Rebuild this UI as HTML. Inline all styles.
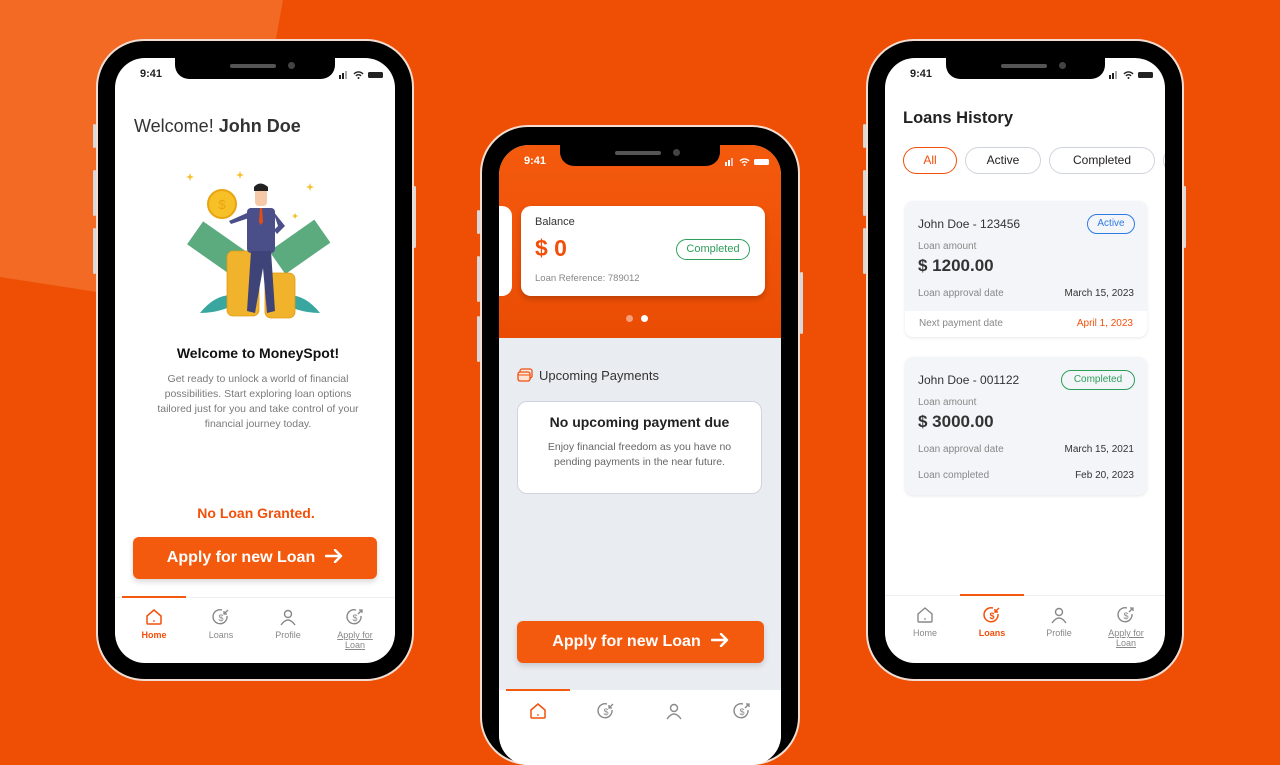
<!DOCTYPE html>
<html><head><meta charset="utf-8"><style>
*{margin:0;padding:0;box-sizing:border-box}
body{width:1280px;height:720px;overflow:hidden;background:#EF4F05;font-family:"Liberation Sans",sans-serif;position:relative}
.a{position:absolute}
.phone{position:absolute;background:#000;border:2px solid #f3ddd2;border-radius:48px}
.btn{position:absolute;width:3px;background:#d9d9d9;border-radius:2px}
.screen{position:absolute;background:#fff;border-radius:30px;overflow:hidden}
.notch{position:absolute;height:21px;background:#000;border-radius:0 0 14px 14px}
.spk{position:absolute;width:46px;height:4px;background:#555;border-radius:2px;top:6px}
.cam{position:absolute;width:7px;height:7px;background:#444;border-radius:50%;top:4px}
.time{position:absolute;font-size:11px;font-weight:bold;color:#222}
.c{text-align:center}
.tab{position:absolute;width:66px;text-align:center;font-size:9px;color:#888}
.tab svg{display:block;margin:0 auto 3px}
.ab{display:inline-block;vertical-align:middle;margin-left:10px;margin-top:-3px}
</style></head><body>
<svg class="a" style="left:0;top:0" width="300" height="300"><polygon points="0,0 283,0 272,60 240,200 97,292 0,277" fill="#F26A24"/></svg>

<!-- PHONE 1 -->
<div class="btn" style="left:93px;top:124px;height:24px"></div>
<div class="btn" style="left:93px;top:170px;height:46px"></div>
<div class="btn" style="left:93px;top:228px;height:46px"></div>
<div class="btn" style="left:413px;top:186px;height:62px"></div>
<div class="phone" style="left:96px;top:39px;width:318px;height:642px"></div>
<div class="screen" style="left:115px;top:58px;width:280px;height:605px">
 <div class="time" style="left:25px;top:10px">9:41</div>
 <svg class="a" style="left:224px;top:12px" width="46" height="10"><rect x="0" y="5" width="2" height="4" fill="#222"/><rect x="3" y="3" width="2" height="6" fill="#222"/><rect x="6" y="1" width="2" height="8" fill="#aaa"/><path d="M15 4 a6 6 0 0 1 9 0 M17 6 a3 3 0 0 1 5 0" stroke="#222" stroke-width="1.4" fill="none"/><circle cx="19.5" cy="8" r="1" fill="#222"/><rect x="29" y="2" width="15" height="6" rx="1.5" fill="#222"/></svg>
 <div class="a" style="left:19px;top:58px;font-size:18px;color:#333">Welcome! <b>John Doe</b></div>
 <svg class="a" style="left:70px;top:105px" width="150" height="160" viewBox="0 0 150 160">
  <g fill="#f6c026"><path d="M5 10 l1 3 3 1 -3 1 -1 3 -1 -3 -3 -1 3 -1z"/><path d="M55 8 l1 3 3 1 -3 1 -1 3 -1 -3 -3 -1 3 -1z"/><path d="M125 20 l1 3 3 1 -3 1 -1 3 -1 -3 -3 -1 3 -1z"/><path d="M110 50 l1 2 2 1 -2 1 -1 2 -1 -2 -2 -1 2 -1z"/></g>
  <g transform="rotate(35 30 85)"><rect x="5" y="70" width="55" height="28" fill="#5bab7f"/></g>
  <g transform="rotate(-35 115 85)"><rect x="88" y="70" width="55" height="28" fill="#5bab7f"/></g>
  <path d="M15 150 q20 -25 45 -15 q-20 15 -45 15z" fill="#3aa6a0"/><path d="M135 150 q-20 -25 -45 -15 q20 15 45 15z" fill="#3aa6a0"/>
  <g fill="#f1b32c" stroke="#e09a10" stroke-width="0.8"><rect x="42" y="88" width="32" height="65" rx="6"/><rect x="80" y="110" width="30" height="45" rx="6"/></g>
  <circle cx="37" cy="41" r="14" fill="#f6c026" stroke="#e9a412" stroke-width="2"/><text x="37" y="46" font-size="13" text-anchor="middle" fill="#e9a412" font-family="Liberation Sans">$</text>
  <rect x="62" y="45" width="28" height="45" rx="4" fill="#4a4f8a"/><path d="M62 50 l-18 8 2 3 18 -6z M88 48 l12 15 -8 8 -3 -4 4 -4z" fill="#4a4f8a"/>
  <path d="M66 88 l-4 60 8 2 8 -45 4 45 8 -2 -4 -60z" fill="#3f4478"/>
  <rect x="70" y="25" width="12" height="18" rx="4" fill="#f5c9a8"/><path d="M69 24 q6 -7 14 0 l0 4 -14 0z" fill="#222"/><path d="M75 45 l2 0 1 14 -2 3 -2 -3z" fill="#e44d12"/>
 </svg>
 <div class="a c" style="left:0;width:286px;top:287px;font-size:14px;font-weight:bold;color:#111">Welcome to MoneySpot!</div>
 <div class="a c" style="left:35px;width:216px;top:314px;font-size:10.5px;line-height:15px;color:#7a7a7a">Get ready to unlock a world of financial possibilities. Start exploring loan options tailored just for you and take control of your financial journey today.</div>
 <div class="a c" style="left:0;width:282px;top:447px;font-size:14px;font-weight:bold;color:#f2500a">No Loan Granted.</div>
 <div class="a c" style="left:18px;top:479px;width:244px;height:42px;background:#f45a0d;border-radius:6px;color:#fff;font-size:16px;font-weight:bold;line-height:42px;box-shadow:0 3px 6px rgba(0,0,0,.15)">Apply for new Loan<svg class="ab" width="18" height="14" viewBox="0 0 18 14"><path d="M1 7 H16 M10 1 L16 7 L10 13" stroke="#fff" stroke-width="2.4" fill="none" stroke-linecap="round" stroke-linejoin="round"/></svg></div>
 <div class="a" style="left:0;top:539px;width:280px;height:1px;background:#eee"></div>
 <div class="a" style="left:7px;top:538px;width:64px;height:2px;background:#f45a0d"></div>
 <div class="tab" style="left:6px;top:549px;color:#f2500a;font-weight:bold"><svg width="20" height="20" viewBox="0 0 20 20"><path d="M3 9 L10 3 L17 9 V16 Q17 17 16 17 H4 Q3 17 3 16Z" fill="none" stroke="#f2500a" stroke-width="1.5"/><circle cx="10" cy="14" r="0.9" fill="#f2500a"/></svg>Home</div>
 <div class="tab" style="left:73px;top:549px"><svg width="20" height="20" viewBox="0 0 20 20"><path d="M16 9 A7 7 0 1 1 11 3" fill="none" stroke="#888" stroke-width="1.4"/><path d="M17 3 l-4 4 M13 4 v3 h3" stroke="#888" stroke-width="1.3" fill="none"/><text x="10" y="14" font-size="9" text-anchor="middle" fill="#888">$</text></svg>Loans</div>
 <div class="tab" style="left:140px;top:549px"><svg width="20" height="20" viewBox="0 0 20 20"><circle cx="10" cy="7" r="3.5" fill="none" stroke="#888" stroke-width="1.4"/><path d="M3 18 q7 -10 14 0" fill="none" stroke="#888" stroke-width="1.4"/></svg>Profile</div>
 <div class="tab" style="left:207px;top:549px;line-height:10px;text-decoration:underline"><svg width="20" height="20" viewBox="0 0 20 20"><path d="M16 9 A7 7 0 1 1 11 3" fill="none" stroke="#888" stroke-width="1.4"/><path d="M13 7 l4 -4 M14 3 h3 v3" stroke="#888" stroke-width="1.3" fill="none"/><text x="10" y="14" font-size="9" text-anchor="middle" fill="#888">$</text></svg>Apply for<br>Loan</div>
</div>
<div class="notch" style="left:175px;top:58px;width:160px"><div class="spk" style="left:55px"></div><div class="cam" style="left:113px"></div></div>

<!-- PHONE 2 -->
<div class="btn" style="left:477px;top:210px;height:24px"></div>
<div class="btn" style="left:477px;top:256px;height:46px"></div>
<div class="btn" style="left:477px;top:316px;height:46px"></div>
<div class="btn" style="left:800px;top:272px;height:62px"></div>
<div class="phone" style="left:480px;top:125px;width:320px;height:640px"></div>
<div class="screen" style="left:499px;top:145px;width:282px;height:620px;background:#e9ecf1">
 <div class="a" style="left:0;top:0;width:282px;height:193px;background:linear-gradient(#f45a0d,#ea4c04)"></div>
 <div class="time" style="left:25px;top:10px;color:#fff">9:41</div>
 <svg class="a" style="left:226px;top:12px" width="46" height="10"><rect x="0" y="5" width="2" height="4" fill="#fff"/><rect x="3" y="3" width="2" height="6" fill="#fff"/><rect x="6" y="1" width="2" height="8" fill="#fbb"/><path d="M15 4 a6 6 0 0 1 9 0 M17 6 a3 3 0 0 1 5 0" stroke="#fff" stroke-width="1.4" fill="none"/><circle cx="19.5" cy="8" r="1" fill="#fff"/><rect x="29" y="2" width="15" height="6" rx="1.5" fill="#fff"/></svg>
 <div class="a" style="left:-20px;top:61px;width:33px;height:90px;background:#fff;border-radius:10px"></div>
 <div class="a" style="left:22px;top:61px;width:244px;height:90px;background:#fff;border-radius:10px;box-shadow:0 3px 6px rgba(0,0,0,.2)">
  <div class="a" style="left:14px;top:10px;font-size:11px;color:#333">Balance</div>
  <div class="a" style="left:14px;top:29px;font-size:23px;font-weight:bold;color:#f2500a">$ 0</div>
  <div class="a" style="left:155px;top:33px;width:74px;height:21px;border:1.5px solid #2e9e5b;border-radius:11px;font-size:11px;color:#2e9e5b;text-align:center;line-height:18px">Completed</div>
  <div class="a" style="left:14px;top:67px;font-size:9.5px;color:#888">Loan Reference: 789012</div>
 </div>
 <div class="a" style="left:127px;top:170px;width:7px;height:7px;border-radius:50%;background:#f5a07c"></div>
 <div class="a" style="left:142px;top:170px;width:7px;height:7px;border-radius:50%;background:#fff"></div>
 <svg class="a" style="left:18px;top:223px" width="16" height="14"><rect x="3" y="1" width="12" height="9" rx="2" fill="none" stroke="#f2500a" stroke-width="1.3"/><rect x="1" y="4" width="12" height="9" rx="2" fill="#fde3d6" stroke="#f2500a" stroke-width="1.3"/><line x1="1" y1="7" x2="13" y2="7" stroke="#f2500a"/></svg>
 <div class="a" style="left:40px;top:223px;font-size:13px;color:#333">Upcoming Payments</div>
 <div class="a c" style="left:18px;top:256px;width:245px;height:93px;background:#fff;border:1.5px solid #cfd3dd;border-radius:10px">
  <div style="margin-top:12px;font-size:14px;font-weight:bold;color:#222">No upcoming payment due</div>
  <div style="margin-top:10px;font-size:10.5px;line-height:15px;color:#666">Enjoy financial freedom as you have no<br>pending payments in the near future.</div>
 </div>
 <div class="a c" style="left:18px;top:476px;width:247px;height:42px;background:#f45a0d;border-radius:6px;color:#fff;font-size:16px;font-weight:bold;line-height:42px;box-shadow:0 3px 6px rgba(0,0,0,.15)">Apply for new Loan<svg class="ab" width="18" height="14" viewBox="0 0 18 14"><path d="M1 7 H16 M10 1 L16 7 L10 13" stroke="#fff" stroke-width="2.4" fill="none" stroke-linecap="round" stroke-linejoin="round"/></svg></div>
 <div class="a" style="left:0;top:545px;width:282px;height:80px;background:#fff"></div>
 <div class="a" style="left:7px;top:544px;width:64px;height:2px;background:#f45a0d"></div>
 <svg class="a" style="left:29px;top:556px" width="20" height="20" viewBox="0 0 20 20"><path d="M3 9 L10 3 L17 9 V16 Q17 17 16 17 H4 Q3 17 3 16Z" fill="none" stroke="#f2500a" stroke-width="1.5"/><circle cx="10" cy="14" r="0.9" fill="#f2500a"/></svg>
 <svg class="a" style="left:97px;top:556px" width="20" height="20" viewBox="0 0 20 20"><path d="M16 9 A7 7 0 1 1 11 3" fill="none" stroke="#888" stroke-width="1.4"/><path d="M17 3 l-4 4 M13 4 v3 h3" stroke="#888" stroke-width="1.3" fill="none"/><text x="10" y="14" font-size="9" text-anchor="middle" fill="#888">$</text></svg>
 <svg class="a" style="left:165px;top:556px" width="20" height="20" viewBox="0 0 20 20"><circle cx="10" cy="7" r="3.5" fill="none" stroke="#888" stroke-width="1.4"/><path d="M3 18 q7 -10 14 0" fill="none" stroke="#888" stroke-width="1.4"/></svg>
 <svg class="a" style="left:233px;top:556px" width="20" height="20" viewBox="0 0 20 20"><path d="M16 9 A7 7 0 1 1 11 3" fill="none" stroke="#888" stroke-width="1.4"/><path d="M13 7 l4 -4 M14 3 h3 v3" stroke="#888" stroke-width="1.3" fill="none"/><text x="10" y="14" font-size="9" text-anchor="middle" fill="#888">$</text></svg>
</div>
<div class="notch" style="left:560px;top:145px;width:160px"><div class="spk" style="left:55px"></div><div class="cam" style="left:113px"></div></div>

<!-- PHONE 3 -->
<div class="btn" style="left:863px;top:124px;height:24px"></div>
<div class="btn" style="left:863px;top:170px;height:46px"></div>
<div class="btn" style="left:863px;top:228px;height:46px"></div>
<div class="btn" style="left:1183px;top:186px;height:62px"></div>
<div class="phone" style="left:866px;top:39px;width:318px;height:642px"></div>
<div class="screen" style="left:885px;top:58px;width:280px;height:605px">
 <div class="time" style="left:25px;top:10px">9:41</div>
 <svg class="a" style="left:224px;top:12px" width="46" height="10"><rect x="0" y="5" width="2" height="4" fill="#222"/><rect x="3" y="3" width="2" height="6" fill="#222"/><rect x="6" y="1" width="2" height="8" fill="#aaa"/><path d="M15 4 a6 6 0 0 1 9 0 M17 6 a3 3 0 0 1 5 0" stroke="#222" stroke-width="1.4" fill="none"/><circle cx="19.5" cy="8" r="1" fill="#222"/><rect x="29" y="2" width="15" height="6" rx="1.5" fill="#222"/></svg>
 <div class="a" style="left:18px;top:51px;font-size:16.5px;font-weight:bold;color:#222">Loans History</div>
 <div class="a c" style="left:18px;top:89px;width:54px;height:27px;border:1.3px solid #f2500a;border-radius:14px;font-size:12px;color:#f2500a;line-height:25px">All</div>
 <div class="a c" style="left:80px;top:89px;width:76px;height:27px;border:1.3px solid #cfd3dd;border-radius:14px;font-size:12px;color:#222;line-height:25px">Active</div>
 <div class="a c" style="left:164px;top:89px;width:106px;height:27px;border:1.3px solid #cfd3dd;border-radius:14px;font-size:12px;color:#222;line-height:25px">Completed</div>
 <div class="a" style="left:278px;top:89px;width:40px;height:27px;border:1.3px solid #cfd3dd;border-radius:14px"></div>
 <div class="a" style="left:20px;top:143px;width:242px;height:136px;background:#f4f5f8;border-radius:8px;box-shadow:0 1px 3px rgba(0,0,0,.1);overflow:hidden;font-size:10px;color:#888">
  <div class="a" style="left:13px;top:16px;font-size:12px;color:#333">John Doe - 123456</div>
  <div class="a" style="left:182px;top:13px;width:48px;height:20px;border:1.3px solid #2d7be5;border-radius:10px;color:#2d7be5;text-align:center;line-height:17px">Active</div>
  <div class="a" style="left:13px;top:40px">Loan amount</div>
  <div class="a" style="left:13px;top:55px;font-size:17px;font-weight:bold;color:#333">$ 1200.00</div>
  <div class="a" style="left:13px;top:87px">Loan approval date</div>
  <div class="a" style="right:13px;top:87px;color:#333">March 15, 2023</div>
  <div class="a" style="left:0;top:110px;width:242px;height:26px;background:#fff"></div>
  <div class="a" style="left:14px;top:117px">Next payment date</div>
  <div class="a" style="right:14px;top:117px;color:#f2500a">April 1, 2023</div>
 </div>
 <div class="a" style="left:20px;top:299px;width:242px;height:138px;background:#f4f5f8;border-radius:8px;box-shadow:0 1px 3px rgba(0,0,0,.1);font-size:10px;color:#888">
  <div class="a" style="left:13px;top:16px;font-size:12px;color:#333">John Doe - 001122</div>
  <div class="a" style="left:156px;top:13px;width:74px;height:20px;border:1.3px solid #2e9e5b;border-radius:10px;color:#2e9e5b;text-align:center;line-height:17px">Completed</div>
  <div class="a" style="left:13px;top:40px">Loan amount</div>
  <div class="a" style="left:13px;top:55px;font-size:17px;font-weight:bold;color:#333">$ 3000.00</div>
  <div class="a" style="left:13px;top:87px">Loan approval date</div>
  <div class="a" style="right:13px;top:87px;color:#333">March 15, 2021</div>
  <div class="a" style="left:13px;top:113px">Loan completed</div>
  <div class="a" style="right:13px;top:113px;color:#333">Feb 20, 2023</div>
 </div>
 <div class="a" style="left:0;top:537px;width:280px;height:1px;background:#eee"></div>
 <div class="a" style="left:75px;top:536px;width:64px;height:2px;background:#f45a0d"></div>
 <div class="tab" style="left:7px;top:547px"><svg width="20" height="20" viewBox="0 0 20 20"><path d="M3 9 L10 3 L17 9 V16 Q17 17 16 17 H4 Q3 17 3 16Z" fill="none" stroke="#888" stroke-width="1.4"/><circle cx="10" cy="14" r="0.9" fill="#888"/></svg>Home</div>
 <div class="tab" style="left:74px;top:547px;color:#f2500a;font-weight:bold"><svg width="20" height="20" viewBox="0 0 20 20"><path d="M16 9 A7 7 0 1 1 11 3" fill="none" stroke="#f2500a" stroke-width="1.5"/><path d="M17 3 l-4 4 M13 4 v3 h3" stroke="#f2500a" stroke-width="1.4" fill="none"/><text x="10" y="14" font-size="9" text-anchor="middle" fill="#f2500a">$</text></svg>Loans</div>
 <div class="tab" style="left:141px;top:547px"><svg width="20" height="20" viewBox="0 0 20 20"><circle cx="10" cy="7" r="3.5" fill="none" stroke="#888" stroke-width="1.4"/><path d="M3 18 q7 -10 14 0" fill="none" stroke="#888" stroke-width="1.4"/></svg>Profile</div>
 <div class="tab" style="left:208px;top:547px;line-height:10px;text-decoration:underline"><svg width="20" height="20" viewBox="0 0 20 20"><path d="M16 9 A7 7 0 1 1 11 3" fill="none" stroke="#888" stroke-width="1.4"/><path d="M13 7 l4 -4 M14 3 h3 v3" stroke="#888" stroke-width="1.3" fill="none"/><text x="10" y="14" font-size="9" text-anchor="middle" fill="#888">$</text></svg>Apply for<br>Loan</div>
</div>
<div class="notch" style="left:946px;top:58px;width:159px"><div class="spk" style="left:55px"></div><div class="cam" style="left:113px"></div></div>
</body></html>
